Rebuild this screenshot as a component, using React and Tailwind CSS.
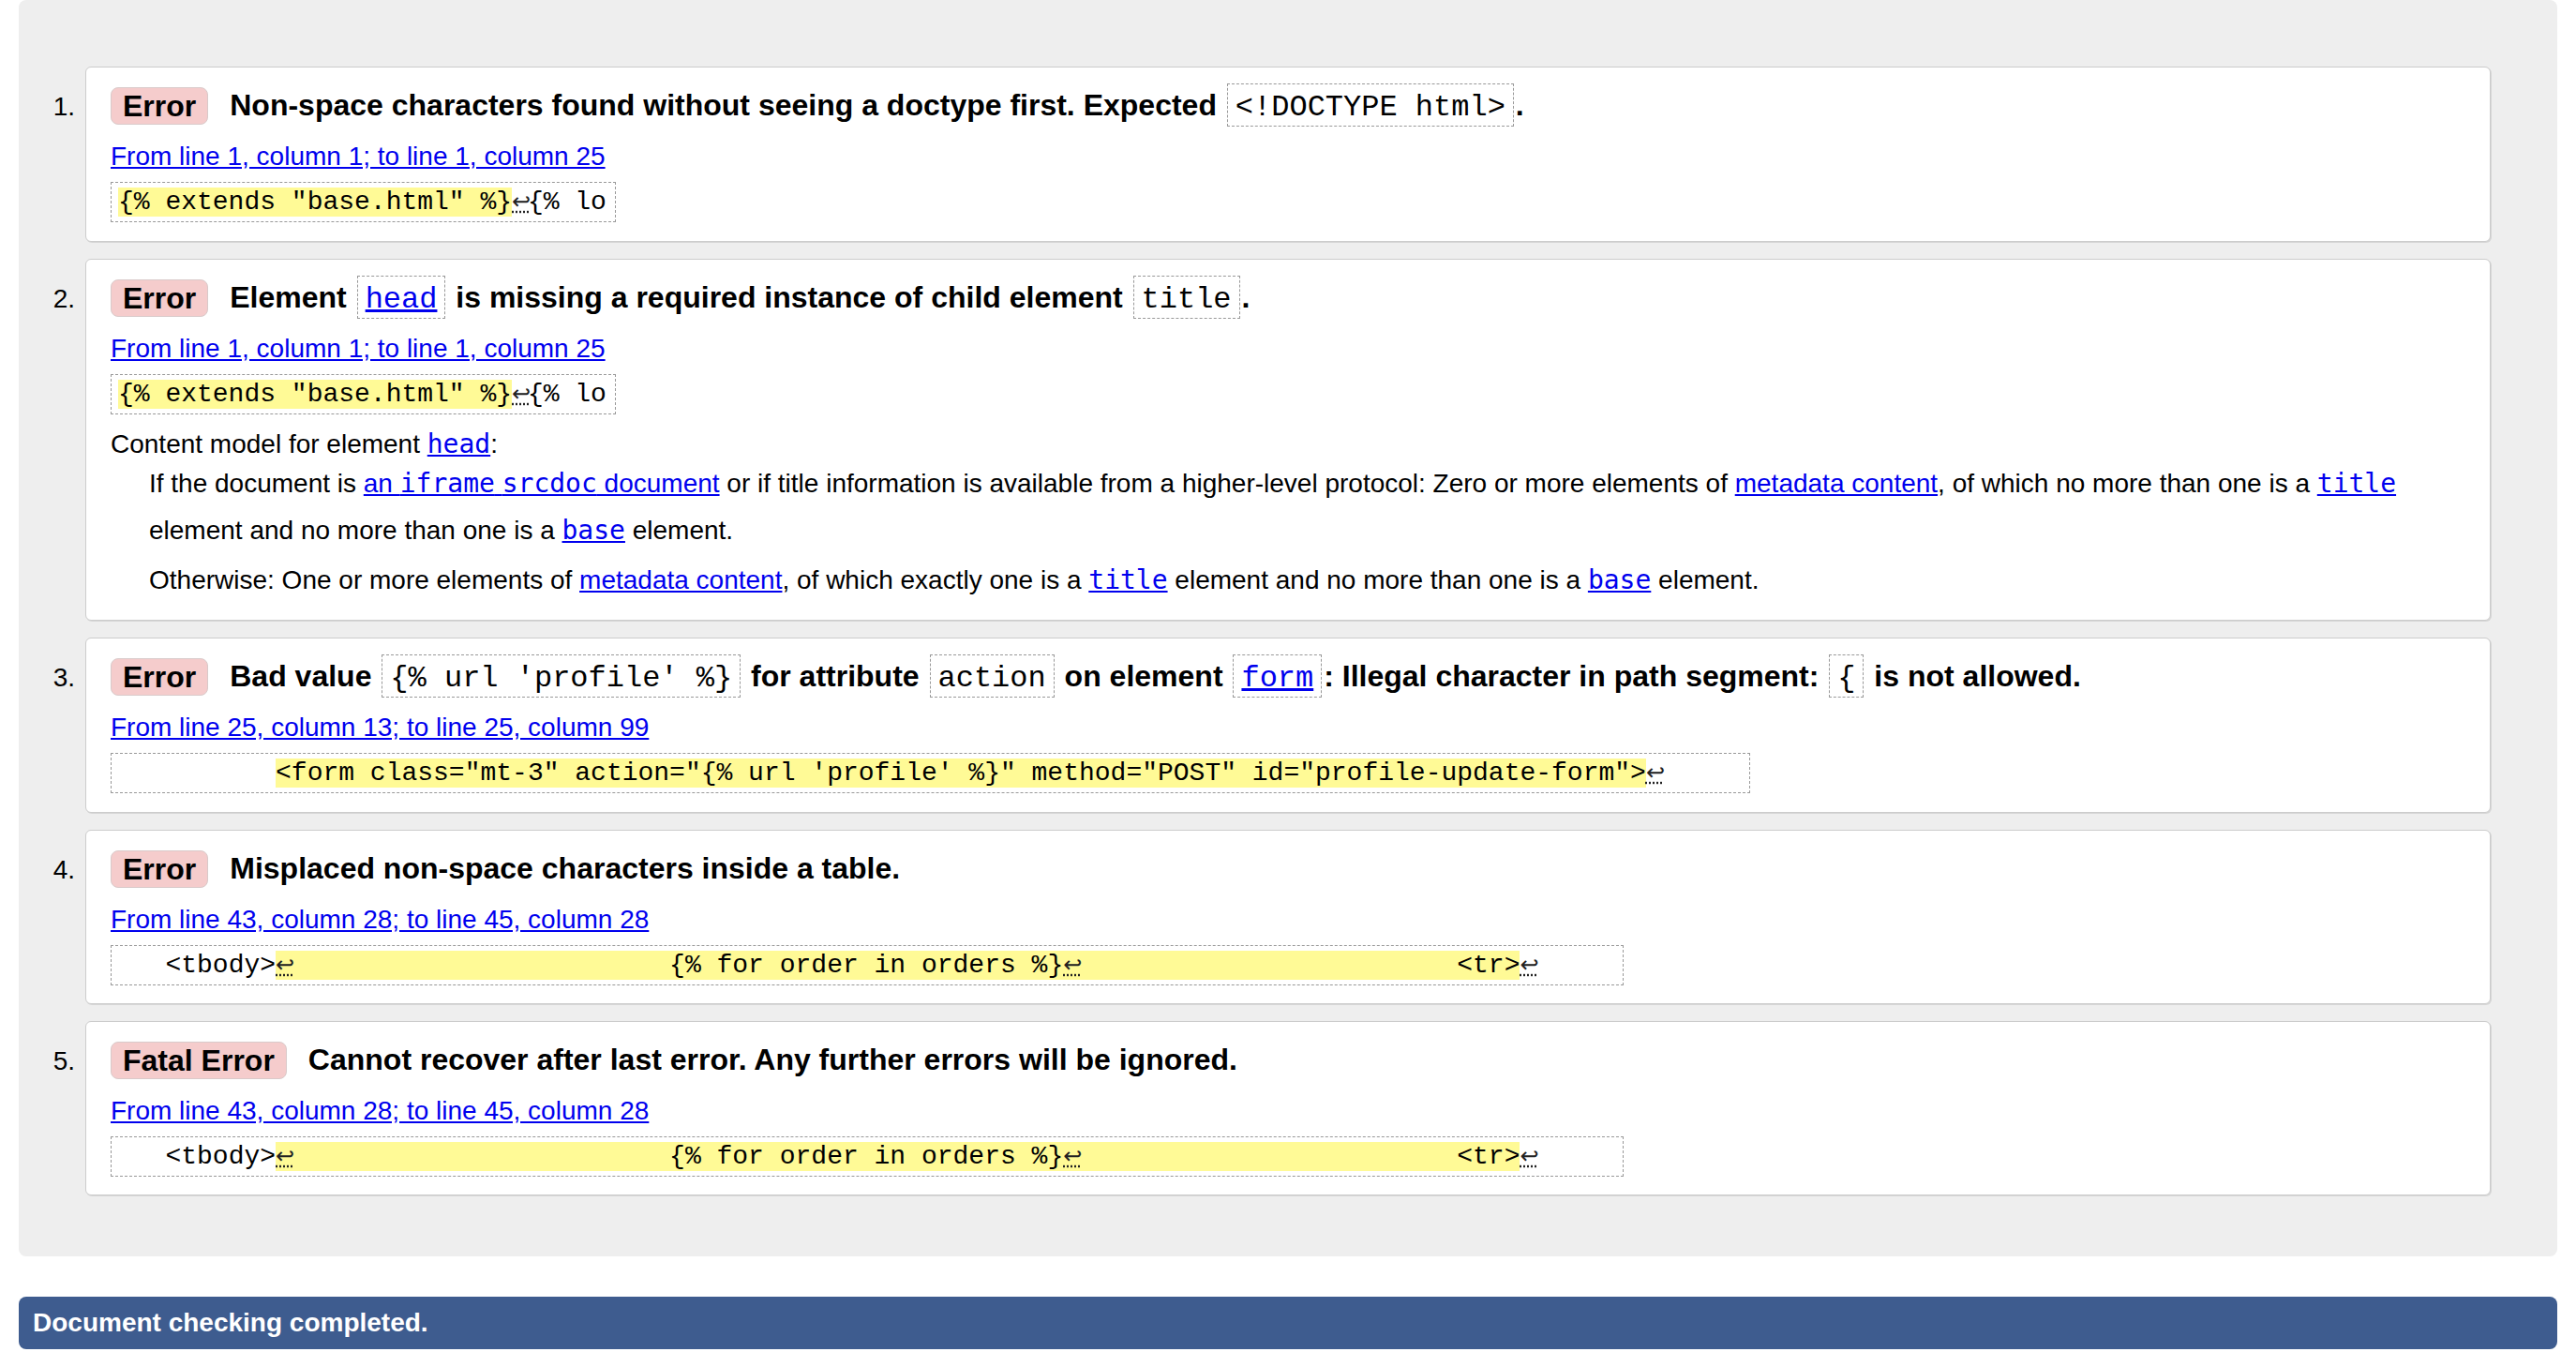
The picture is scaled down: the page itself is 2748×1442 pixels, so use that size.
import React from "react";

const MONO = "font-['Liberation_Mono',monospace]";
const SMONO = "font-['DejaVu_Sans_Mono',monospace]";
const LINK = "text-[#0000ee] underline";

function TCode({ children }) {
  return (
    <code
      className={`${MONO} font-normal text-[32px] leading-none border border-dashed border-[#999] px-[8px] pt-[6px] pb-[1px] mx-[2px]`}
    >
      {children}
    </code>
  );
}

function Badge({ children }) {
  return (
    <span className="inline-block align-top mt-[2px] mr-[23px] h-[40px] rounded-[8px] border border-[#d9caca] bg-[#f5cccc] px-[12px] leading-[38px]">
      {children}
    </span>
  );
}

function Ret() {
  return (
    <span className="inline-block w-[16.8px] text-left text-[24px] leading-none text-[#222] underline decoration-dotted font-['DejaVu_Sans',sans-serif]">
      ↩
    </span>
  );
}

function Hl({ children }) {
  return <span className="bg-[#fffa96]">{children}</span>;
}

function Extract({ children }) {
  return (
    <div className="mt-[6px] h-[43px]">
      <code
        className={`${MONO} inline-block h-[43px] whitespace-pre border border-dashed border-[#999] pl-[7px] pr-[9px] py-[5px] text-[28px] leading-[31px] text-black`}
      >
        {children}
      </code>
    </div>
  );
}

function Loc({ children }) {
  return (
    <p className="mt-[13px] text-[28px] leading-[42px]">
      <a href="#" className={LINK}>
        {children}
      </a>
    </p>
  );
}

function Item({ n, pb = "pb-[20px]", children }) {
  return (
    <div className="flex">
      <div className="w-[71px] shrink-0 pr-[11px] pt-[22px] text-right text-[28px] leading-[42px]">
        {n}.
      </div>
      <div
        className={`flex-1 rounded-[6px] border border-[#cccccc] bg-white pl-[26px] pr-[26px] pt-[19px] ${pb} shadow-[1px_1px_0_#d6d6d6]`}
      >
        {children}
      </div>
    </div>
  );
}

function Title({ badge, children }) {
  return (
    <p className="h-[42px] text-[32px] font-bold leading-[42px]">
      <Badge>{badge}</Badge>
      {children}
    </p>
  );
}

const sp = (k) => " ".repeat(k);

export default function App() {
  return (
    <div className="min-h-[1442px] bg-white text-black font-['Liberation_Sans',Arial,sans-serif]">
      <div className="mx-[20px] flex flex-col gap-[18px] rounded-[8px] bg-[#eeeeee] pt-[71px] pb-[65px] pr-[71px]">
        <Item n={1}>
          <Title badge="Error">
            Non-space characters found without seeing a doctype first. Expected{" "}
            <TCode>{"<!DOCTYPE html>"}</TCode>.
          </Title>
          <Loc>From line 1, column 1; to line 1, column 25</Loc>
          <Extract>
            <Hl>{'{% extends "base.html" %}'}</Hl>
            <Ret />
            {"{% lo"}
          </Extract>
        </Item>

        <Item n={2}>
          <Title badge="Error">
            Element{" "}
            <TCode>
              <a href="#" className={LINK}>
                head
              </a>
            </TCode>{" "}
            is missing a required instance of child element <TCode>title</TCode>.
          </Title>
          <Loc>From line 1, column 1; to line 1, column 25</Loc>
          <Extract>
            <Hl>{'{% extends "base.html" %}'}</Hl>
            <Ret />
            {"{% lo"}
          </Extract>
          <p className="mt-[15px] text-[28px] leading-[34px]">
            Content model for element{" "}
            <a href="#" className={LINK}>
              <code className={`${SMONO} text-[28px]`}>head</code>
            </a>
            :
          </p>
          <div className="ml-[41px]">
            <p className="text-[28px] leading-[50px]">
              If the document is{" "}
              <a href="#" className={LINK}>
                an <code className={`${SMONO} text-[28px]`}>iframe</code>{" "}
                <code className={`${SMONO} text-[28px]`}>srcdoc</code> document
              </a>{" "}
              or if title information is available from a higher-level protocol: Zero or more
              elements of{" "}
              <a href="#" className={LINK}>
                metadata content
              </a>
              , of which no more than one is a{" "}
              <a href="#" className={LINK}>
                <code className={`${SMONO} text-[28px]`}>title</code>
              </a>{" "}
              element and no more than one is a{" "}
              <a href="#" className={LINK}>
                <code className={`${SMONO} text-[28px]`}>base</code>
              </a>{" "}
              element.
            </p>
            <p className="mt-[6px] text-[28px] leading-[44px]">
              Otherwise: One or more elements of{" "}
              <a href="#" className={LINK}>
                metadata content
              </a>
              , of which exactly one is a{" "}
              <a href="#" className={LINK}>
                <code className={`${SMONO} text-[28px]`}>title</code>
              </a>{" "}
              element and no more than one is a{" "}
              <a href="#" className={LINK}>
                <code className={`${SMONO} text-[28px]`}>base</code>
              </a>{" "}
              element.
            </p>
          </div>
        </Item>

        <Item n={3}>
          <Title badge="Error">
            Bad value <TCode>{"{% url 'profile' %}"}</TCode> for attribute{" "}
            <TCode>action</TCode> on element{" "}
            <TCode>
              <a href="#" className={LINK}>
                form
              </a>
            </TCode>
            : Illegal character in path segment: <TCode>{"{"}</TCode> is not allowed.
          </Title>
          <Loc>From line 25, column 13; to line 25, column 99</Loc>
          <Extract>
            {sp(10)}
            <Hl>
              {
                '<form class="mt-3" action="{% url \'profile\' %}" method="POST" id="profile-update-form">'
              }
            </Hl>
            <Ret />
            {sp(5)}
          </Extract>
        </Item>

        <Item n={4} pb="pb-[19px]">
          <Title badge="Error">Misplaced non-space characters inside a table.</Title>
          <Loc>From line 43, column 28; to line 45, column 28</Loc>
          <Extract>
            {sp(3)}
            {"<tbody>"}
            <Hl>
              <Ret />
              {sp(24)}
              {"{% for order in orders %}"}
              <Ret />
              {sp(24)}
              {"<tr>"}
            </Hl>
            <Ret />
            {sp(5)}
          </Extract>
        </Item>

        <Item n={5} pb="pb-[19px]">
          <Title badge="Fatal Error">
            Cannot recover after last error. Any further errors will be ignored.
          </Title>
          <Loc>From line 43, column 28; to line 45, column 28</Loc>
          <Extract>
            {sp(3)}
            {"<tbody>"}
            <Hl>
              <Ret />
              {sp(24)}
              {"{% for order in orders %}"}
              <Ret />
              {sp(24)}
              {"<tr>"}
            </Hl>
            <Ret />
            {sp(5)}
          </Extract>
        </Item>
      </div>

      <div className="mx-[20px] mt-[43px] h-[56px] rounded-[8px] bg-[#3e5c8f] pl-[15px] text-[28px] font-bold leading-[56px] text-white">
        Document checking completed.
      </div>
    </div>
  );
}
